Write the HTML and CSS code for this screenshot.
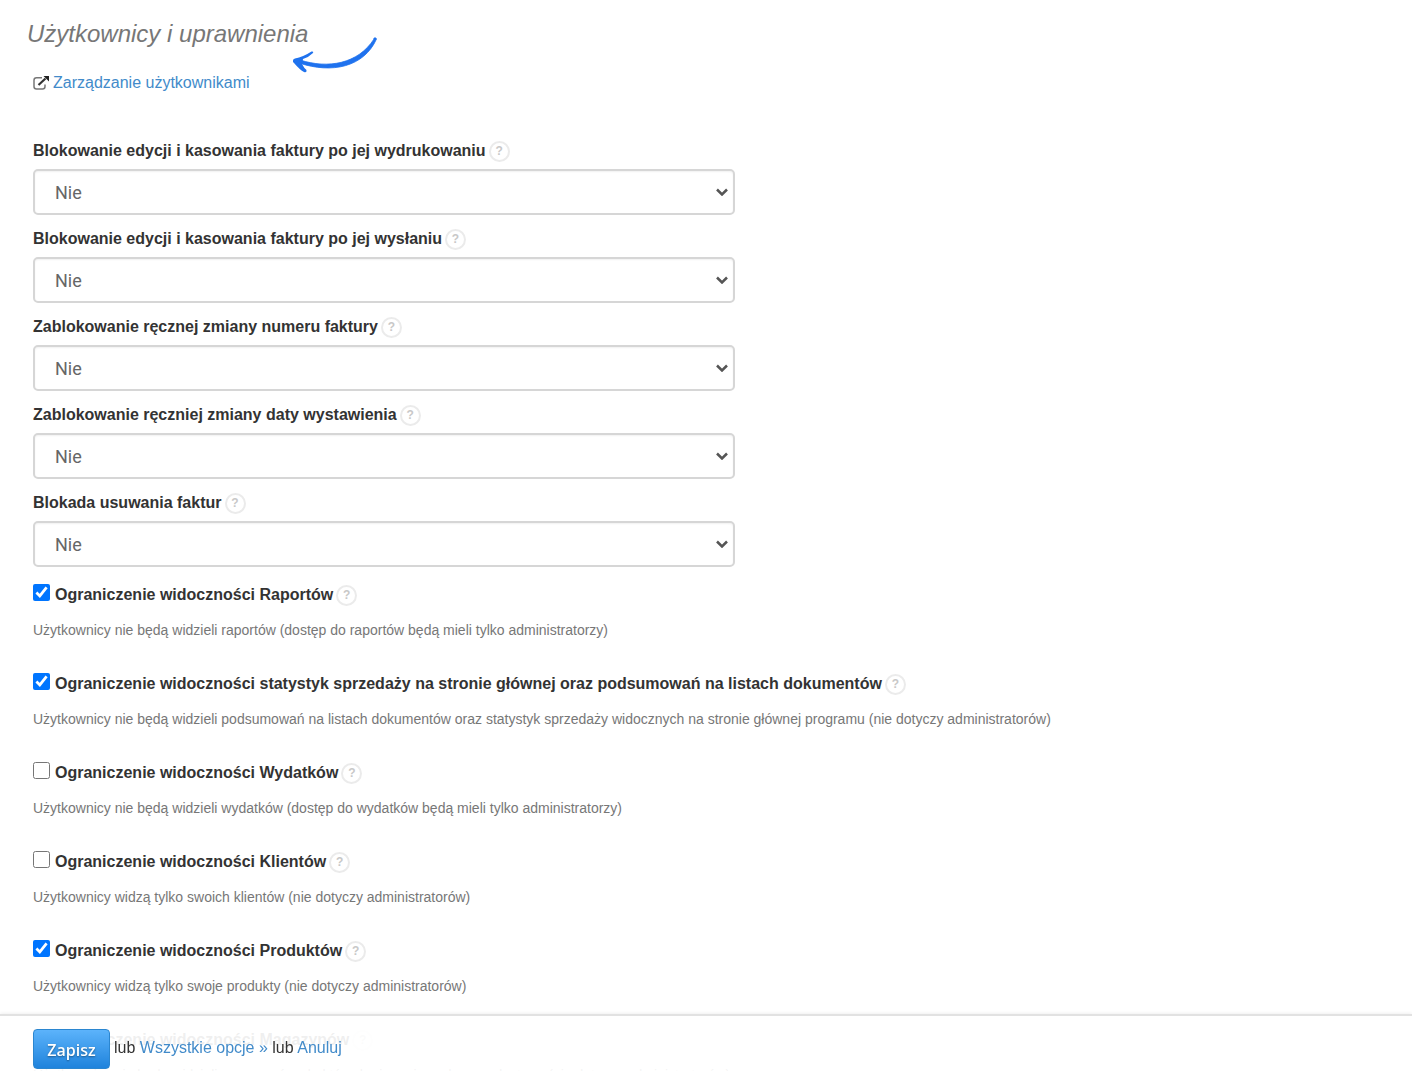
FILE: index.html
```html
<!DOCTYPE html>
<html lang="pl">
<head>
<meta charset="utf-8">
<meta name="viewport" content="width=device-width, initial-scale=1">
<title>Użytkownicy i uprawnienia</title>
<link rel="stylesheet" href="styles.css">
</head>
<body>
<form class="settings">
  <main class="content">
    <h1 class="title">Użytkownicy i uprawnienia
      <svg class="arrow" viewBox="0 0 86 38" aria-hidden="true">
        <path d="M82 3C81 2 84 1 84.500 3C72 31 40 38 7 27L8 24C36 33 66 28 82 3Z" fill="#1f72ee" stroke="#1f72ee" stroke-width="0.800" stroke-linejoin="round"/>
        <path d="M1 24.500Q0.500 26 2 27Q8 34 12 36Q15 37 14.500 34Q12 32 10 28L11 23Q17 21 21 17Q22 15 19.500 15.500Q11 21 3 22.500Q1 23 1 24.500Z" fill="#1f72ee"/>
      </svg>
    </h1>
    <p class="manage">
      <svg class="external" viewBox="0 0 16 14" aria-hidden="true">
        <path d="M9 1.800H3.500Q1 1.800 1 4.300V10.500Q1 13 3.500 13H9.500Q12 13 12 10.500V8.500" fill="none" stroke="#777" stroke-width="1.500"/>
        <path d="M5.500 9L12.500 2.500" stroke="#333" stroke-width="2.200"/>
        <path d="M10.500 0H16V5.500Z" fill="#222"/>
      </svg>
      <a href="#users">Zarządzanie użytkownikami</a>
    </p>

    <div class="fields">
      <div class="field">
        <div class="label-row"><label for="lock-print">Blokowanie edycji i kasowania faktury po jej wydrukowaniu</label><button type="button" class="hint">?</button></div>
        <div class="picker"><select id="lock-print"><option>Nie</option><option>Tak</option></select><svg class="chevron" viewBox="0 0 12 8" aria-hidden="true"><path d="M1 1.500L6 6.500L11 1.500"/></svg></div>
      </div>
      <div class="field">
        <div class="label-row"><label for="lock-send">Blokowanie edycji i kasowania faktury po jej wysłaniu</label><button type="button" class="hint">?</button></div>
        <div class="picker"><select id="lock-send"><option>Nie</option><option>Tak</option></select><svg class="chevron" viewBox="0 0 12 8" aria-hidden="true"><path d="M1 1.500L6 6.500L11 1.500"/></svg></div>
      </div>
      <div class="field">
        <div class="label-row"><label for="lock-number">Zablokowanie ręcznej zmiany numeru faktury</label><button type="button" class="hint">?</button></div>
        <div class="picker"><select id="lock-number"><option>Nie</option><option>Tak</option></select><svg class="chevron" viewBox="0 0 12 8" aria-hidden="true"><path d="M1 1.500L6 6.500L11 1.500"/></svg></div>
      </div>
      <div class="field">
        <div class="label-row"><label for="lock-date">Zablokowanie ręczniej zmiany daty wystawienia</label><button type="button" class="hint">?</button></div>
        <div class="picker"><select id="lock-date"><option>Nie</option><option>Tak</option></select><svg class="chevron" viewBox="0 0 12 8" aria-hidden="true"><path d="M1 1.500L6 6.500L11 1.500"/></svg></div>
      </div>
      <div class="field">
        <div class="label-row"><label for="lock-delete">Blokada usuwania faktur</label><button type="button" class="hint">?</button></div>
        <div class="picker"><select id="lock-delete"><option>Nie</option><option>Tak</option></select><svg class="chevron" viewBox="0 0 12 8" aria-hidden="true"><path d="M1 1.500L6 6.500L11 1.500"/></svg></div>
      </div>
    </div>

    <div class="limits">
      <div class="limit">
        <div class="label-row"><input type="checkbox" id="hide-reports" checked><label for="hide-reports">Ograniczenie widoczności Raportów</label><button type="button" class="hint">?</button></div>
        <p class="note">Użytkownicy nie będą widzieli raportów (dostęp do raportów będą mieli tylko administratorzy)</p>
      </div>
      <div class="limit">
        <div class="label-row"><input type="checkbox" id="hide-stats" checked><label for="hide-stats">Ograniczenie widoczności statystyk sprzedaży na stronie głównej oraz podsumowań na listach dokumentów</label><button type="button" class="hint">?</button></div>
        <p class="note">Użytkownicy nie będą widzieli podsumowań na listach dokumentów oraz statystyk sprzedaży widocznych na stronie głównej programu (nie dotyczy administratorów)</p>
      </div>
      <div class="limit">
        <div class="label-row"><input type="checkbox" id="hide-costs"><label for="hide-costs">Ograniczenie widoczności Wydatków</label><button type="button" class="hint">?</button></div>
        <p class="note">Użytkownicy nie będą widzieli wydatków (dostęp do wydatków będą mieli tylko administratorzy)</p>
      </div>
      <div class="limit">
        <div class="label-row"><input type="checkbox" id="hide-clients"><label for="hide-clients">Ograniczenie widoczności Klientów</label><button type="button" class="hint">?</button></div>
        <p class="note">Użytkownicy widzą tylko swoich klientów (nie dotyczy administratorów)</p>
      </div>
      <div class="limit">
        <div class="label-row"><input type="checkbox" id="hide-products" checked><label for="hide-products">Ograniczenie widoczności Produktów</label><button type="button" class="hint">?</button></div>
        <p class="note">Użytkownicy widzą tylko swoje produkty (nie dotyczy administratorów)</p>
      </div>
      <div class="limit">
        <div class="label-row"><input type="checkbox" id="hide-stores"><label for="hide-stores">Ograniczenie widoczności Magazynów</label><button type="button" class="hint">?</button></div>
        <p class="note">Użytkownicy nie będą widzieli magazynów, do których nie mają nadanego dostępu (nie dotyczy administratorów)</p>
      </div>
    </div>
  </main>

  <footer class="actions">
    <button type="submit" class="save">Zapisz</button>
    <p class="alternatives">lub <a href="#all">Wszystkie opcje »</a> lub <a href="#cancel">Anuluj</a></p>
  </footer>
</form>
</body>
</html>
```
FILE: styles.css
```css
* {
  box-sizing: border-box;
}

html {
  scrollbar-width: none;
}

body {
  margin: 0;
  background: #fff;
  color: #333;
  font: 16px/20px "Liberation Sans", Arial, sans-serif;
}

a {
  color: #428bca;
  text-decoration: none;
}

p {
  margin: 0;
}

.content {
  padding: 18px 33px 0;
}

.title {
  position: relative;
  width: fit-content;
  margin: 0 0 0 -6px;
  color: #777;
  font-size: 24px;
  font-style: italic;
  font-weight: 400;
  line-height: 32px;
}

.arrow {
  position: absolute;
  left: calc(100% - 16px);
  top: 18px;
  width: 86px;
  height: 38px;
}

.manage {
  display: flex;
  align-items: center;
  gap: 4px;
  margin: 23px 0 46px;
}

.external {
  width: 16px;
  height: 14px;
}

.fields {
  display: grid;
  gap: 12px;
  max-width: 702px;
}

.field {
  display: grid;
  gap: 6px;
}

.label-row {
  display: flex;
  align-items: center;
  gap: 5px;
  height: 24px;
}

.label-row label {
  font-weight: 700;
}

.hint {
  width: 21px;
  height: 21px;
  flex: none;
  margin-left: -2px;
  padding: 0;
  border: 2px solid #ebebeb;
  border-radius: 50%;
  background: #fff;
  color: #c8c8c8;
  font: 700 12px/16px "Liberation Sans", Arial, sans-serif;
}

.picker {
  display: grid;
  align-items: center;
}

.picker > * {
  grid-area: 1 / 1;
}

.picker select {
  appearance: none;
  width: 100%;
  height: 46px;
  padding: 1px 20px 0;
  border: 2px solid #d6d6d6;
  border-radius: 5px;
  background: #fff;
  box-shadow: inset 0 1px 2px rgba(0, 0, 0, 0.06);
  color: #666;
  font: 18px/24px Roboto, sans-serif;
}

.chevron {
  justify-self: end;
  width: 12px;
  height: 8px;
  margin-right: 7px;
  fill: none;
  stroke: #555;
  stroke-width: 2.5;
  pointer-events: none;
}

.limits {
  display: grid;
  gap: 26px;
  margin-top: 16px;
}

.limit {
  display: grid;
  gap: 13px;
}

.limit input {
  width: 17px;
  height: 17px;
  margin: 0 0 5px;
}

.note {
  height: 26px;
  color: #777;
  font-size: 14px;
  line-height: 20px;
}

.actions {
  position: fixed;
  inset: auto 0 0;
  display: flex;
  align-items: flex-start;
  gap: 4px;
  min-height: 57px;
  padding: 13px 33px 2px;
  border-top: 2px solid #e2e2e2;
  background: rgba(255, 255, 255, 0.92);
  box-shadow: 0 -1px 3px rgba(0, 0, 0, 0.06);
}

.save {
  width: 77px;
  height: 40px;
  padding: 1px 0 0;
  border: 1px solid #2b86d0;
  border-radius: 4px;
  background: linear-gradient(#5cb3fb, #1f83dc);
  color: #fff;
  font: 600 16px/24px "Open Sans", sans-serif;
  text-shadow: 0 1px 2px rgba(0, 0, 0, 0.4);
}

.alternatives {
  padding-top: 9px;
}
```
